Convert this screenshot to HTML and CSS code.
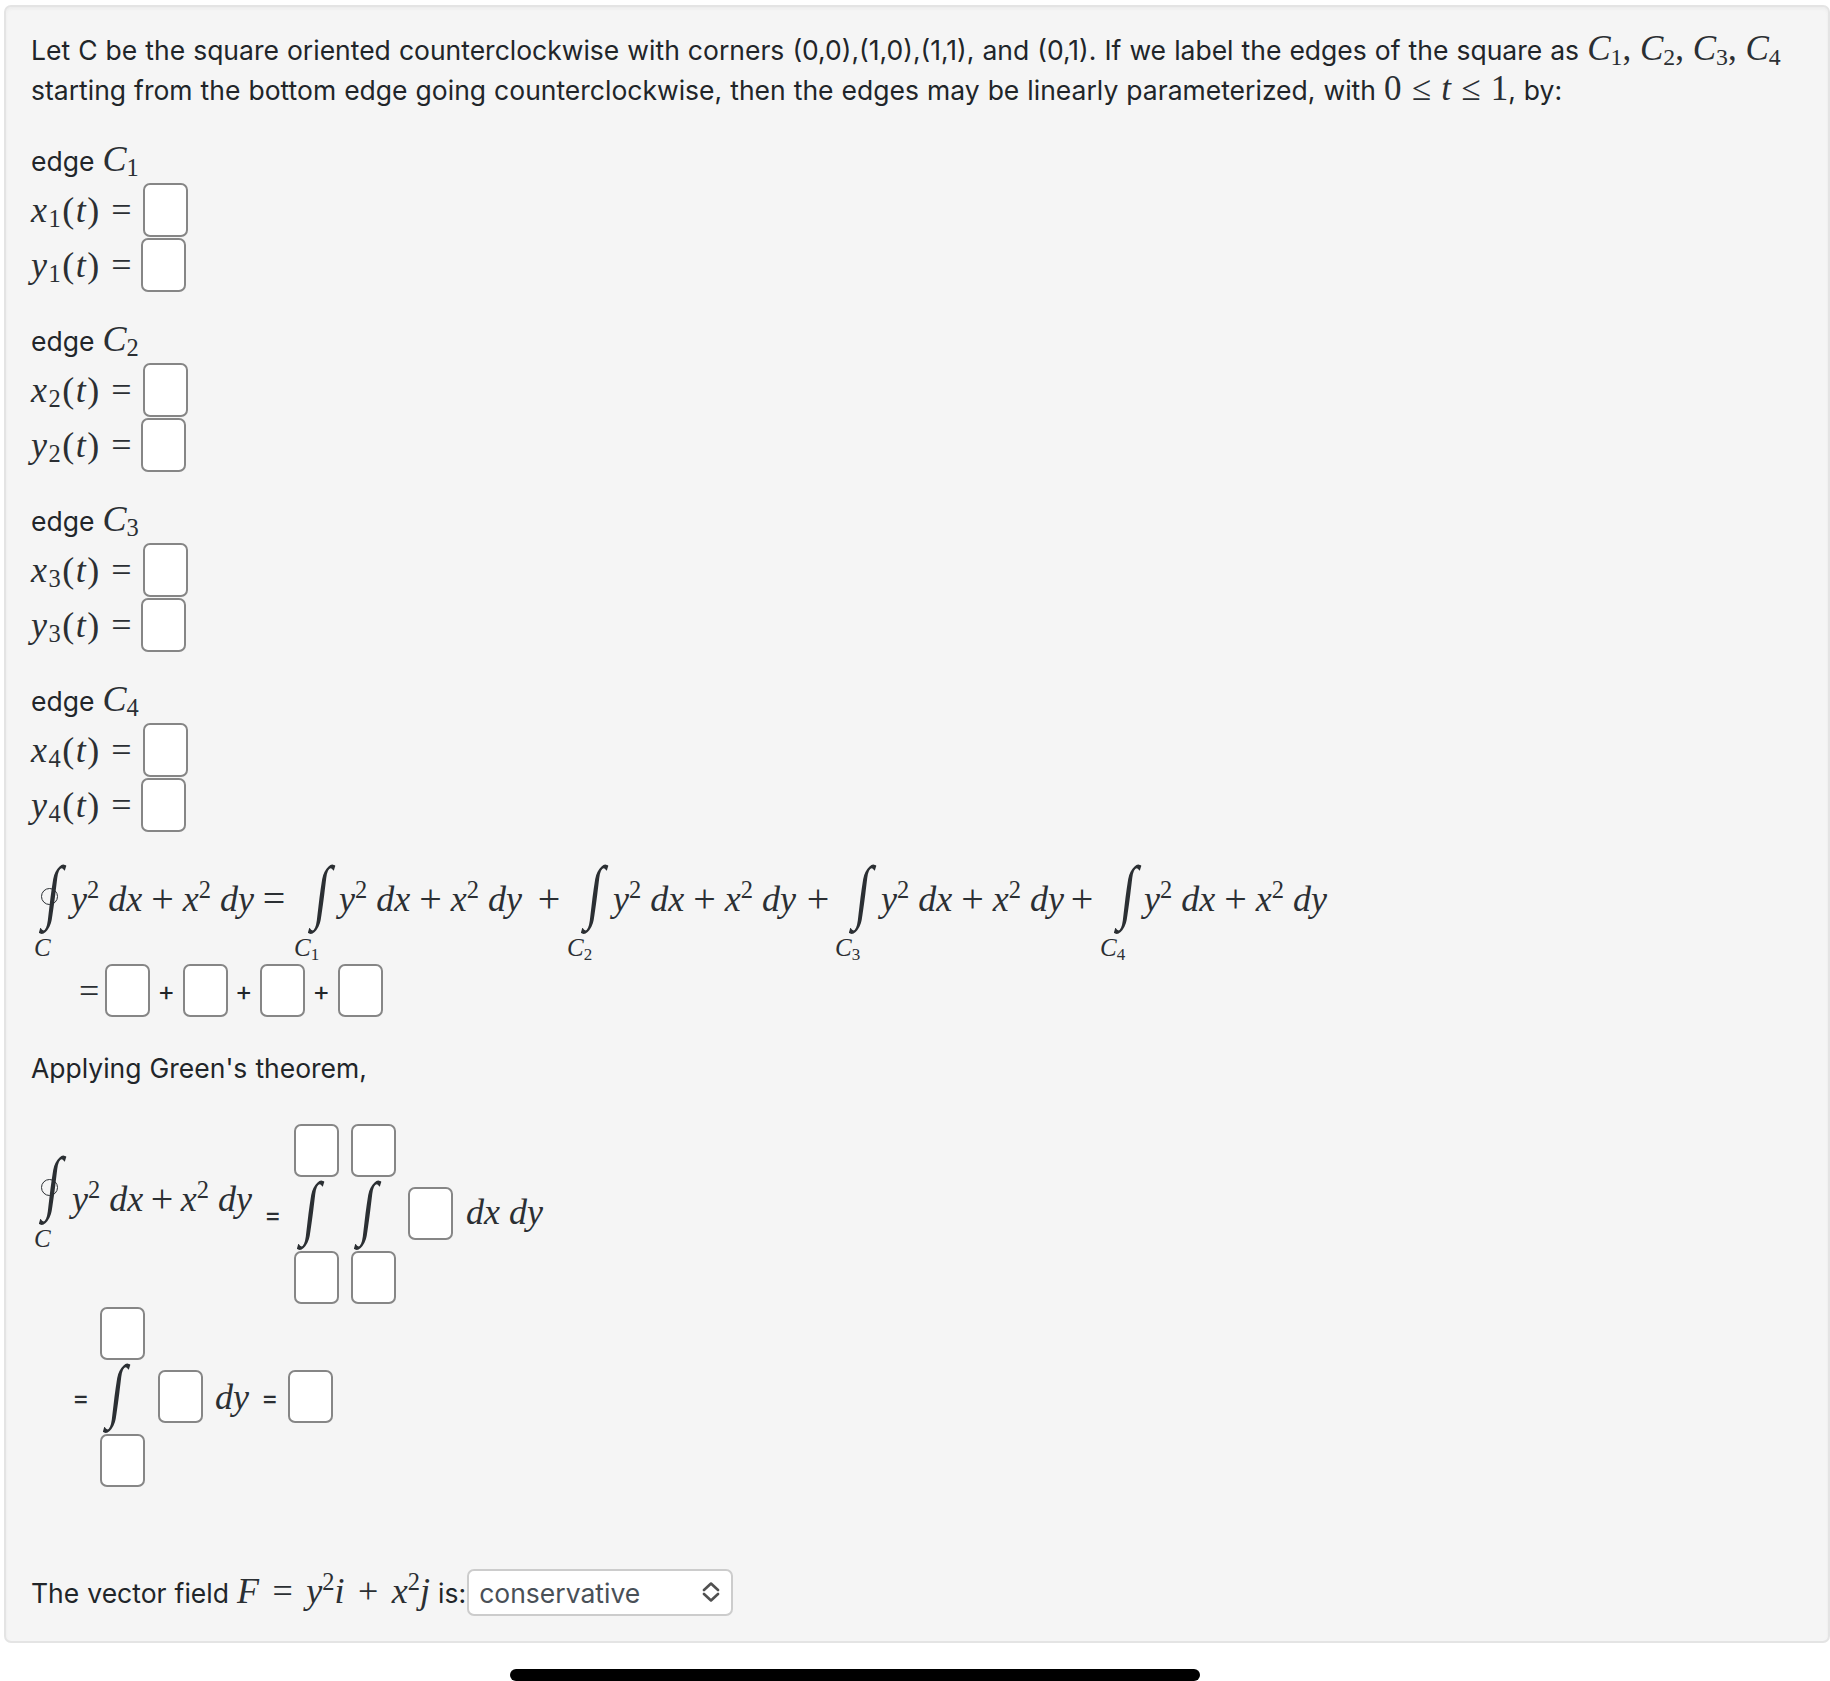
FILE: index.html
```html
<!DOCTYPE html>
<html lang="en">
<head>
  <meta charset="UTF-8">
  <title>Green's theorem question</title>
  <link rel="stylesheet" href="styles.css">
</head>
<body>
  <div class="panel">
    <p class="intro">Let C be the square oriented counterclockwise with corners (0,0),(1,0),(1,1), and (0,1). If we label the edges of the square as <span class="m"><i>C</i><sub>1</sub>, <i>C</i><sub>2</sub>, <i>C</i><sub>3</sub>, <i>C</i><sub>4</sub></span><br>starting from the bottom edge going counterclockwise, then the edges may be linearly parameterized, with <span class="m m-rel">0 ≤ <i>t</i> ≤ 1</span>, by:</p>

    <!-- edge parameterizations -->
    <div class="edge">
      <div class="edge-title">edge <span class="m"><i>C</i><sub>1</sub></span></div>
      <div class="param"><span class="m lbl"><i>x</i><sub>1</sub>(<i>t</i>) =</span><input class="box" type="text"></div>
      <div class="param"><span class="m lbl lbl-y"><i>y</i><sub>1</sub>(<i>t</i>) =</span><input class="box" type="text"></div>
    </div>
    <div class="edge">
      <div class="edge-title">edge <span class="m"><i>C</i><sub>2</sub></span></div>
      <div class="param"><span class="m lbl"><i>x</i><sub>2</sub>(<i>t</i>) =</span><input class="box" type="text"></div>
      <div class="param"><span class="m lbl lbl-y"><i>y</i><sub>2</sub>(<i>t</i>) =</span><input class="box" type="text"></div>
    </div>
    <div class="edge">
      <div class="edge-title">edge <span class="m"><i>C</i><sub>3</sub></span></div>
      <div class="param"><span class="m lbl"><i>x</i><sub>3</sub>(<i>t</i>) =</span><input class="box" type="text"></div>
      <div class="param"><span class="m lbl lbl-y"><i>y</i><sub>3</sub>(<i>t</i>) =</span><input class="box" type="text"></div>
    </div>
    <div class="edge">
      <div class="edge-title">edge <span class="m"><i>C</i><sub>4</sub></span></div>
      <div class="param"><span class="m lbl"><i>x</i><sub>4</sub>(<i>t</i>) =</span><input class="box" type="text"></div>
      <div class="param"><span class="m lbl lbl-y"><i>y</i><sub>4</sub>(<i>t</i>) =</span><input class="box" type="text"></div>
    </div>

    <!-- line integral split over the four edges -->
    <div class="split m">
      <div class="limit oint-col"><span class="int oint">∫</span><span class="limit-sub"><i>C</i></span></div>
      <span class="terms ml-6">
        <span><i>y</i><sup>2</sup> <i>dx</i></span><span class="plus-op">+</span><span><i>x</i><sup>2</sup> <i>dy</i></span>
      </span>
      <span class="op ml-9">=</span>
      <div class="limit ml-20"><span class="int">∫</span><span class="limit-sub"><i>C</i><sub>1</sub></span></div>
      <span class="terms ml-5">
        <span><i>y</i><sup>2</sup> <i>dx</i></span><span class="plus-op">+</span><span><i>x</i><sup>2</sup> <i>dy</i></span>
      </span>
      <span class="op ml-16">+</span>
      <div class="limit ml-18"><span class="int">∫</span><span class="limit-sub"><i>C</i><sub>2</sub></span></div>
      <span class="terms ml-6">
        <span><i>y</i><sup>2</sup> <i>dx</i></span><span class="plus-op">+</span><span><i>x</i><sup>2</sup> <i>dy</i></span>
      </span>
      <span class="op ml-11">+</span>
      <div class="limit ml-17"><span class="int">∫</span><span class="limit-sub"><i>C</i><sub>3</sub></span></div>
      <span class="terms ml-6">
        <span><i>y</i><sup>2</sup> <i>dx</i></span><span class="plus-op">+</span><span><i>x</i><sup>2</sup> <i>dy</i></span>
      </span>
      <span class="op ml-7">+</span>
      <div class="limit ml-18"><span class="int">∫</span><span class="limit-sub"><i>C</i><sub>4</sub></span></div>
      <span class="terms ml-4">
        <span><i>y</i><sup>2</sup> <i>dx</i></span><span class="plus-op">+</span><span><i>x</i><sup>2</sup> <i>dy</i></span>
      </span>
    </div>

    <div class="sum">
      <span class="m sum-eq">=</span>
      <input class="box" type="text">
      <span class="plus">+</span>
      <input class="box" type="text">
      <span class="plus">+</span>
      <input class="box" type="text">
      <span class="plus">+</span>
      <input class="box" type="text">
    </div>

    <p class="green">Applying Green's theorem,</p>

    <!-- double integral with limits -->
    <div class="double m">
      <div class="limit oint-col"><span class="int oint">∫</span><span class="limit-sub"><i>C</i></span></div>
      <span class="terms terms-b ml-7">
        <span><i>y</i><sup>2</sup> <i>dx</i></span><span class="plus-op">+</span><span><i>x</i><sup>2</sup> <i>dy</i></span>
      </span>
      <span class="eq ml-12">=</span>
      <div class="stack ml-16">
        <input class="box" type="text">
        <span class="int">∫</span>
        <input class="box" type="text">
      </div>
      <div class="stack ml-12">
        <input class="box" type="text">
        <span class="int">∫</span>
        <input class="box" type="text">
      </div>
      <input class="box ml-12" type="text">
      <span class="dd ml-13"><i>dx</i> <i>dy</i></span>
    </div>

    <div class="single m">
      <span class="eq ml-41">=</span>
      <div class="stack ml-14">
        <input class="box" type="text">
        <span class="int">∫</span>
        <input class="box" type="text">
      </div>
      <input class="box ml-13" type="text">
      <span class="dd ml-12"><i>dy</i></span>
      <span class="eq ml-12">=</span>
      <input class="box ml-13" type="text">
    </div>

    <div class="field">
      <span>The vector field <span class="m"><i>F</i> = <i>y</i><sup>2</sup><i>i</i> + <i>x</i><sup>2</sup><i>j</i></span> is:</span>
      <div class="select-wrap">
        <select class="select">
          <option>conservative</option>
          <option>not conservative</option>
        </select>
        <svg class="chevrons" width="20" height="20" viewBox="0 0 20 20" fill="none" stroke="#505050" stroke-width="2.6" stroke-linecap="round" stroke-linejoin="round">
          <path d="M3 8 10 1.5l7 6.5"/>
          <path d="M3 12l7 6.5 7-6.5"/>
        </svg>
      </div>
    </div>
  </div>
  <div class="home-bar"></div>
</body>
</html>
```

FILE: styles.css
```css
body {
  margin: 0;
  background-color: #fff;
  font-family: Inter, "Noto Sans", sans-serif;
  font-size: 26.5px;
  word-spacing: 0.6px;
  line-height: 40px;
  color: #212529;
}
.panel {
  margin: 5px 0 0 4px;
  padding: 23px 20px 24px 25px;
  background-color: #f5f5f5;
  border: 2px solid #e4e4e4;
  border-radius: 7px;
  box-shadow: inset 0 2px 3px #ececec;
  height: 1638px;
  box-sizing: border-box;
}
.intro {
  margin: 0 0 31px;
  white-space: nowrap;
}
/* Math text */
.m {
  font-family: "Liberation Serif", "DejaVu Serif", serif;
  font-size: 36px;
  line-height: 0;
  word-spacing: 0;
  color: #2b2f33;
}
.intro .m {
  font-size: 35px;
}
.intro .m-rel {
  word-spacing: 1.5px;
}
.m sub,
.m sup {
  font-size: 0.68em;
  line-height: 0;
}
.m sub {
  vertical-align: -0.22em;
}
.m sup {
  vertical-align: 0.52em;
}
.box {
  width: 45px;
  height: 54px;
  padding: 0;
  box-sizing: border-box;
  background-color: #fff;
  border: 2px solid #868686;
  border-radius: 7px;
  flex-shrink: 0;
}
/* Edges */
.edge {
  margin-bottom: 29px;
}
.edge-title {
  height: 40px;
  margin-bottom: 2px;
}
.param {
  display: flex;
  align-items: center;
  height: 54px;
  margin-bottom: 1px;
}
.lbl {
  width: 112px;
  line-height: 40px;
  white-space: nowrap;
  letter-spacing: 1.5px;
}
.lbl-y {
  width: 110px;
}
/* Line integral rows */
.split {
  display: flex;
  align-items: flex-start;
  height: 101px;
  padding-top: 2px;
}
.limit {
  display: flex;
  flex-direction: column;
  width: 29px;
}
.oint-col {
  position: relative;
  width: 34px;
}
/* small ring across the contour integral */
.oint-col::after {
  content: "";
  position: absolute;
  left: 10px;
  top: 25px;
  width: 15px;
  height: 15px;
  border: 1.5px solid #2b2f33;
  border-radius: 50%;
}
.int {
  display: block;
  height: 72px;
  width: 29px;
  line-height: 72px;
  font-size: 72px;
  text-align: center;
  transform: translate(3px, -8px) scale(0.7, 0.98) skewX(-10deg);
}
.oint {
  margin-left: 5px;
}
.limit-sub {
  margin: -1px 0 0 -11px;
  font-size: 25px;
  line-height: 28px;
  white-space: nowrap;
}
.oint-col .limit-sub {
  margin-left: 3px;
}
.terms {
  display: flex;
  justify-content: space-between;
  align-items: center;
  width: 183px;
  height: 72px;
  line-height: 72px;
  white-space: nowrap;
}
.terms-b {
  width: 180px;
  margin-top: -30px;
}
.double .oint-col {
  margin-top: -20px;
}
.double .dd {
  margin-top: -4px;
}
.plus-op {
  font-size: 40px;
}
.op {
  display: flex;
  justify-content: center;
  align-items: center;
  width: 22px;
  height: 72px;
  font-size: 40px;
  line-height: 72px;
}
.sum {
  display: flex;
  align-items: center;
  height: 53px;
  padding-left: 48px;
}
.sum-eq {
  width: 26px;
}
.sum .box {
  height: 53px;
}
.plus {
  width: 32.5px;
  text-align: center;
}
.green {
  margin: 31px 0 36px;
}
.double {
  display: flex;
  align-items: center;
  height: 179px;
}
.single {
  display: flex;
  align-items: center;
  height: 179px;
  margin-top: 4px;
}
.stack {
  display: flex;
  flex-direction: column;
  align-items: flex-start;
  width: 45px;
}
.stack .box {
  height: 53px;
}
.stack .int {
  margin-top: 2px;
}
.eq {
  font-family: Inter, sans-serif;
  font-size: 26.5px;
  width: 14px;
}
.dd {
  white-space: nowrap;
}
.double .box,
.single .box {
  height: 53px;
}
/* Bottom select */
.field {
  display: flex;
  align-items: center;
  margin-top: 83px;
  gap: 1px;
}
.field .m {
  word-spacing: 4.5px;
}
.select-wrap {
  position: relative;
  display: flex;
}
.select {
  appearance: none;
  width: 266px;
  height: 47px;
  padding: 0 10px;
  box-sizing: border-box;
  font-family: Inter, sans-serif;
  font-size: 26.5px;
  color: #495057;
  background-color: #fff;
  border: 2px solid #cccccc;
  border-radius: 7px;
}
.chevrons {
  position: absolute;
  top: 13px;
  right: 12px;
}
.home-bar {
  width: 690px;
  height: 12px;
  margin: 26px auto 0;
  transform: translateX(-60px);
  background-color: #000;
  border-radius: 7px;
}
.ml-4 { margin-left: 4px; }
.ml-5 { margin-left: 5px; }
.ml-6 { margin-left: 6px; }
.ml-7 { margin-left: 7px; }
.ml-9 { margin-left: 9px; }
.ml-11 { margin-left: 11px; }
.ml-12 { margin-left: 12px; }
.ml-13 { margin-left: 13px; }
.ml-14 { margin-left: 14px; }
.ml-16 { margin-left: 16px; }
.ml-17 { margin-left: 17px; }
.ml-18 { margin-left: 18px; }
.ml-20 { margin-left: 20px; }
.ml-41 { margin-left: 41px; }
```
